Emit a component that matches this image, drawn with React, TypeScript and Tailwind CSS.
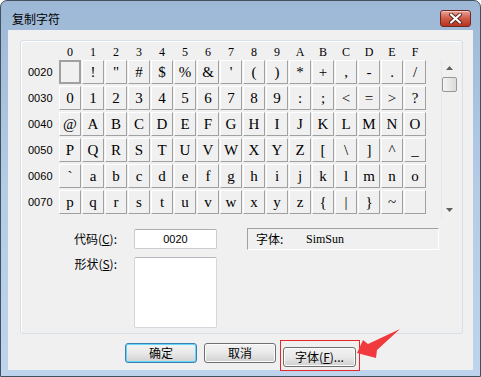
import React from 'react';

const hex = '0123456789ABCDEF'.split('');
const rows = [2, 3, 4, 5, 6, 7];

const Cell = ({ ch, selected }: { ch: string; selected?: boolean }) => (
  <div
    className={
      selected
        ? 'w-[22px] h-[24px] border-2 border-[#a0a0a0] bg-[#f0f0f0]'
        : "w-[22px] h-[24px] flex items-center justify-center bg-[#f0f0f0] border border-t-white border-l-white border-r-[#a0a0a0] border-b-[#a0a0a0] text-[15px] leading-none text-black font-['Liberation_Serif',serif]"
    }
  >
    {selected ? null : ch}
  </div>
);

const Btn = ({ children, focused }: { children: React.ReactNode; focused?: boolean }) => (
  <button
    className={
      'h-[20px] rounded-[3px] border bg-gradient-to-b from-[#f3f3f3] via-[#e9e9e9] to-[#d0d0d0] text-[12px] leading-none text-black ' +
      (focused
        ? 'w-[72px] border-[#3c7fb1] shadow-[inset_0_0_0_1px_#5fd6fb]'
        : 'w-[72px] border-[#707070] shadow-[inset_0_0_0_1px_#fbfbfb]')
    }
  >
    {children}
  </button>
);

export default function App() {
  return (
    <div className="relative w-[481px] h-[377px] overflow-hidden bg-white font-['Noto_Sans_CJK_SC','Liberation_Sans',sans-serif]">
      <div className="flex flex-col w-full h-full rounded-t-[7px] border border-[#44505e] bg-gradient-to-b from-[#9db8d6] via-[#b4cce6] to-[#bed4ec]">
        {/* title bar */}
        <div className="h-[29px] flex items-center justify-between pl-[11px] pr-[9px]">
          <span className="text-[12px] text-black mt-[6px]">复制字符</span>
          <div className="w-[31px] h-[17px] mt-[5px] rounded-[3px] border border-[#6e2a22] bg-gradient-to-b from-[#e6a396] via-[#cf5a48] to-[#b8321f] flex items-center justify-center shadow-[inset_0_1px_0_#f2c4ba]">
            <svg width="13" height="11" viewBox="0 0 13 11">
              <path d="M2 1.5 L11 9.5 M11 1.5 L2 9.5" stroke="#5a231c" strokeWidth="4" strokeLinecap="round" />
              <path d="M2 1.5 L11 9.5 M11 1.5 L2 9.5" stroke="#ffffff" strokeWidth="2.2" strokeLinecap="round" />
            </svg>
          </div>
        </div>

        {/* client area */}
        <div className="mx-[7px] h-[340px] bg-[#f0f0f0] flex flex-col">
          <div className="ml-[12px] mt-[10px] w-[443px] h-[294px] rounded-[3px] border border-[#d5dfe5] shadow-[inset_1px_1px_0_#ffffff] flex flex-col">
            <div className="flex items-start mt-[2px]">
              <div className="flex flex-col">
                {/* column header */}
                <div className="flex h-[17px] pl-[38px] gap-[1px] font-['Liberation_Serif',serif] text-[12px] text-black">
                  {hex.map((h) => (
                    <div key={h} className="w-[22px] flex items-center justify-center">
                      {h}
                    </div>
                  ))}
                </div>
                <div className="flex flex-col gap-[2px]">
                  {rows.map((r) => (
                    <div key={r} className="flex items-center">
                      <div className="w-[38px] pl-[7px] text-[11px] font-['Liberation_Sans',sans-serif] text-black">
                        00{r}0
                      </div>
                      <div className="flex gap-[1px]">
                        {hex.map((_, i) => {
                          const code = r * 16 + i;
                          const ch = code === 0x7f ? '' : String.fromCharCode(code);
                          return <Cell key={i} ch={ch} selected={code === 0x20} />;
                        })}
                      </div>
                    </div>
                  ))}
                </div>
              </div>
              {/* scrollbar */}
              <div className="ml-[15px] mt-[17px] w-[16px] h-[158px] flex flex-col border-l border-[#e6e6e6]">
                <div className="h-[16px] flex items-center justify-center">
                  <svg width="7" height="4" viewBox="0 0 7 4">
                    <path d="M0 4 L3.5 0 L7 4 Z" fill="#606060" />
                  </svg>
                </div>
                <div className="mt-[1px] h-[15px] rounded-[2px] border border-[#979797] bg-gradient-to-r from-[#f4f4f4] to-[#dcdcdc]" />
                <div className="flex-1" />
                <div className="h-[16px] flex items-center justify-center">
                  <svg width="7" height="4" viewBox="0 0 7 4">
                    <path d="M0 0 L7 0 L3.5 4 Z" fill="#606060" />
                  </svg>
                </div>
              </div>
            </div>

            {/* bottom section */}
            <div className="flex mt-[10px] pl-[51px] text-[12px] text-black">
              <div className="w-[45px] flex flex-col items-end whitespace-nowrap">
                <div className="h-[22px] flex items-center">
                  代码(<u>C</u>):
                </div>
                <div className="mt-[6px] h-[16px] flex items-center">
                  形状(<u>S</u>):
                </div>
              </div>
              <div className="ml-[17px] w-[83px] flex flex-col">
                <div className="mt-[1px] h-[20px] rounded-[2px] border border-[#c9ccd1] border-t-[#abadb3] bg-white flex items-center justify-center font-['Liberation_Sans',sans-serif] text-[11px]">
                  0020
                </div>
                <div className="mt-[8px] h-[71px] rounded-[2px] border border-[#d4d7dc] border-t-[#b5b8be] bg-white" />
              </div>
              <div className="ml-[30px] w-[192px] h-[22px] border border-t-[#a0a0a0] border-l-[#a0a0a0] border-r-white border-b-white flex items-center pl-[8px]">
                <span className="w-[50px]">字体:</span>
                <span className="font-['Liberation_Serif',serif] text-[12px]">SimSun</span>
              </div>
            </div>
          </div>

          {/* buttons */}
          <div className="mt-[9px] flex justify-center gap-[7px]">
            <Btn focused>确定</Btn>
            <Btn>取消</Btn>
            <div className="relative">
              <button className="w-[73px] h-[20px] rounded-[3px] border border-[#707070] shadow-[inset_0_0_0_1px_#fbfbfb] bg-gradient-to-b from-[#f3f3f3] via-[#e9e9e9] to-[#d0d0d0] text-[12px] leading-none text-black">
                字体(<u>F</u>)...
              </button>
              <div className="absolute -left-[3px] -top-[3px] -right-[4px] -bottom-[4px] border border-[#e8262a] pointer-events-none" />
            </div>
          </div>
        </div>
      </div>

      {/* annotation arrow */}
      <svg className="absolute left-0 top-0 pointer-events-none" width="481" height="377" viewBox="0 0 481 377">
        <path d="M357 353 L363 340 L368 344 L400 329 L377 350 L376 358 Z" fill="#f03a3e" />
      </svg>
    </div>
  );
}
